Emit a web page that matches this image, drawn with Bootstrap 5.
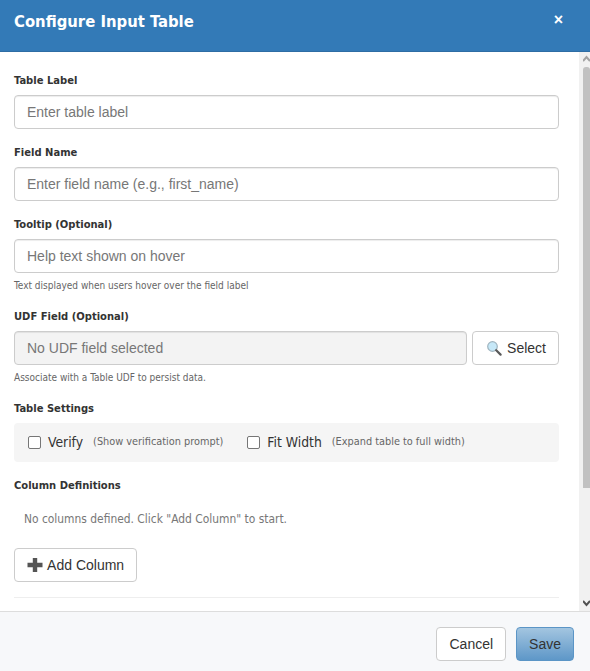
<!DOCTYPE html>
<html lang="en">
<head>
<meta charset="utf-8">
<title>Configure Input Table</title>
<link href="https://cdn.jsdelivr.net/npm/bootstrap@5.3.0/dist/css/bootstrap.min.css" rel="stylesheet">
<style>
html, body { height: 100%; overflow: hidden; background: #fff; }
body { font-family: "DejaVu Sans Condensed", "DejaVu Sans", sans-serif; font-size: 12px; color: #333; }
.dlg { height: 671px; }
.dlg-head { height: 52px; background: #337ab7; border-bottom: 1px solid #2e6da4; padding: 0 14px; color: #fff; }
.dlg-title { font-family: inherit; font-size: 16.5px; font-weight: 700; margin: 0; padding-top: 8px; line-height: 27px; }
.dlg-x { font-family: "Liberation Sans", sans-serif; background: none; border: 0; padding: 0; color: #fff; font-size: 16px; font-weight: 700; line-height: 1; margin: 12px 13px 0 0; }
.dlg-mid { flex: 1 1 auto; min-height: 0; overflow: hidden; }
.dlg-body { flex: 1 1 auto; min-width: 0; overflow: hidden; padding: 20px 20px 0 14px; background: #fff; }
.sbar { flex: 0 0 11px; background: #f1f1f1; padding-left: 4px; }
.sbar-btn { flex: none; height: 15px; }
.sbar-thumb { flex: none; height: 421px; background: #c1c1c1; border-radius: 3px 3px 0 0; }
.fld { margin-bottom: 15px; }
.fld-label { display: block; font-size: 11.1px; font-weight: 700; line-height: 18px; margin-bottom: 5px; color: #333; }
.fld-input.form-control { font-family: "Liberation Sans", sans-serif; height: 34px; font-size: 14px; padding: 6px 12px; border: 1px solid #ccc; border-radius: 4px; color: #555; box-shadow: inset 0 1px 1px rgba(0,0,0,.075); }
.fld-input.form-control::placeholder { color: #777; opacity: 1; }
.fld-input.form-control:disabled { background: #f3f3f3; }
.fld-hint { display: block; font-size: 10px; line-height: 14px; color: #666; margin-top: 6px; }
.pick-btn, .plain-btn { font-family: "Liberation Sans", sans-serif; height: 34px; font-size: 14px; padding: 6px 12px; border: 1px solid #ccc; border-radius: 4px; background: #fff; color: #333; line-height: 20px; white-space: nowrap; }
.pick-gap { gap: 5px; }
.pick-btn { gap: 5px; padding-left: 13px; }
.settings { background: #f5f5f5; border-radius: 4px; height: 39px; padding: 0 14px; }
.chk { width: 13px; height: 13px; border: 1px solid #767676; border-radius: 2px; background: #fff; flex: none; appearance: none; margin: 0 7px 0 0; }
.chk-name { font-size: 13.8px; color: #333; margin-right: 10px; }
.chk-note { font-size: 10.85px; color: #666; margin-right: 24px; }
.empty-note { font-size: 11.9px; color: #777; padding: 0 10px; line-height: 18px; margin: 15px 0 20px; }
.rule { border: 0; border-top: 1px solid #eee; opacity: 1; margin: 15px 0 0; }
.dlg-foot { height: 60px; background: #f7f8fa; border-top: 1px solid #ddd; padding: 15px 16px 0 0; gap: 10px; }
.save-btn { font-family: "Liberation Sans", sans-serif; height: 34px; font-size: 14px; padding: 6px 12px; border: 1px solid #5b95c6; border-radius: 4px; color: #333; background: linear-gradient(#a3c5e0, #5e97c8); line-height: 20px; }
.ico-plus { display: inline-block; vertical-align: -3px; margin-right: 1px; }
</style>
</head>
<body>
<div class="dlg d-flex flex-column">
  <div class="dlg-head flex-shrink-0 d-flex justify-content-between align-items-start">
    <h1 class="dlg-title">Configure Input Table</h1>
    <button type="button" class="dlg-x" aria-label="Close">×</button>
  </div>
  <div class="dlg-mid d-flex">
    <div class="dlg-body">
      <div class="fld">
        <label class="fld-label">Table Label</label>
        <input class="form-control fld-input" placeholder="Enter table label">
      </div>
      <div class="fld">
        <label class="fld-label">Field Name</label>
        <input class="form-control fld-input" placeholder="Enter field name (e.g., first_name)">
      </div>
      <div class="fld">
        <label class="fld-label">Tooltip (Optional)</label>
        <input class="form-control fld-input" placeholder="Help text shown on hover">
        <small class="fld-hint">Text displayed when users hover over the field label</small>
      </div>
      <div class="fld">
        <label class="fld-label">UDF Field (Optional)</label>
        <div class="d-flex pick-gap">
          <input class="form-control fld-input flex-grow-1" placeholder="No UDF field selected" disabled>
          <button type="button" class="pick-btn d-flex align-items-center">
            <svg width="16" height="16" viewBox="0 0 16 16"><circle cx="6.5" cy="6.5" r="4.8" fill="#c6e8f8" stroke="#9fb4bf" stroke-width="1.2"/><path d="M10.2 10.2 L14.6 14.6" stroke="#5a5a5a" stroke-width="2.2" stroke-linecap="round"/></svg>
            Select
          </button>
        </div>
        <small class="fld-hint">Associate with a Table UDF to persist data.</small>
      </div>
      <div class="fld">
        <label class="fld-label">Table Settings</label>
        <div class="settings d-flex align-items-center">
          <input type="checkbox" class="chk"><span class="chk-name">Verify</span><span class="chk-note">(Show verification prompt)</span>
          <input type="checkbox" class="chk"><span class="chk-name">Fit Width</span><span class="chk-note">(Expand table to full width)</span>
        </div>
      </div>
      <label class="fld-label">Column Definitions</label>
      <p class="empty-note">No columns defined. Click "Add Column" to start.</p>
      <button type="button" class="plain-btn">
        <svg class="ico-plus" width="16" height="16" viewBox="0 0 16 16"><path d="M8 1 V15 M0.5 8 H15.5" stroke="#555" stroke-width="4.4"/></svg>
        Add Column
      </button>
      <hr class="rule">
    </div>
    <div class="sbar d-flex flex-column justify-content-between" aria-hidden="true">
      <div>
        <svg class="sbar-btn d-block" width="7" height="15" viewBox="0 0 7 15"><path d="M0 9 L3.5 5 L7 9" fill="none" stroke="#a3a3a3" stroke-width="2"/></svg>
        <div class="sbar-thumb"></div>
      </div>
      <svg class="sbar-btn d-block" width="7" height="15" viewBox="0 0 7 15"><path d="M0 5 L3.5 9 L7 5" fill="none" stroke="#505050" stroke-width="2"/></svg>
    </div>
  </div>
  <div class="dlg-foot flex-shrink-0 d-flex justify-content-end align-items-start">
    <button type="button" class="plain-btn">Cancel</button>
    <button type="button" class="save-btn">Save</button>
  </div>
</div>
</body>
</html>
